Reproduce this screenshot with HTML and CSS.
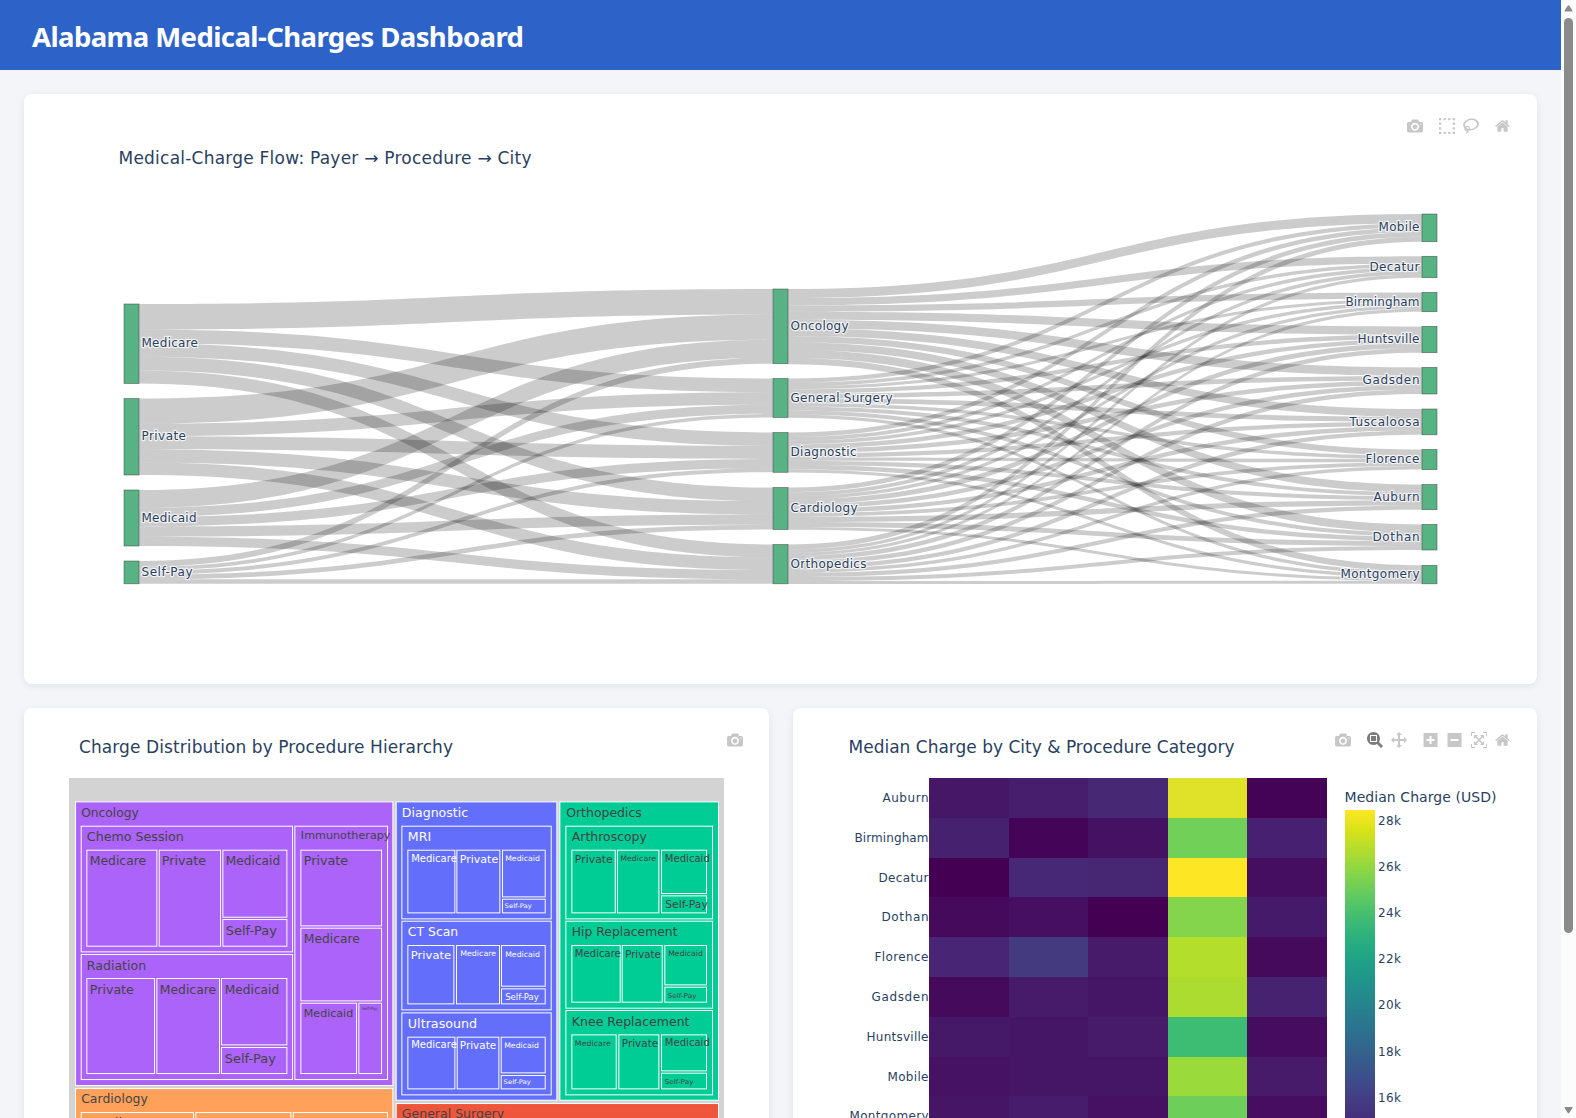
FILE: index.html
```html
<!DOCTYPE html>
<html lang="en">
<head>
<meta charset="utf-8">
<title>Alabama Medical-Charges Dashboard</title>
<link rel="stylesheet" href="styles.css">
</head>
<body>
<svg width="0" height="0" class="sprite">
  <defs>
    <symbol id="camera" viewBox="0 0 1000 1000"><path transform="matrix(1 0 0 -1 0 850)" d="m500 450c-83 0-150-67-150-150 0-83 67-150 150-150 83 0 150 67 150 150 0 83-67 150-150 150z m400 150h-120c-16 0-34 13-39 29l-31 93c-6 15-23 28-40 28h-340c-16 0-34-13-39-28l-31-94c-6-15-23-28-40-28h-120c-55 0-100-45-100-100v-450c0-55 45-100 100-100h800c55 0 100 45 100 100v450c0 55-45 100-100 100z m-400-550c-138 0-250 112-250 250 0 138 112 250 250 250 138 0 250-112 250-250 0-138-112-250-250-250z m365 380c-19 0-35 16-35 35 0 19 16 35 35 35 19 0 35-16 35-35 0-19-16-35-35-35z"/></symbol>
    <symbol id="select" viewBox="0 0 1000 1000"><path transform="matrix(1 0 0 -1 0 850)" d="m0 850l0-143 143 0 0 143-143 0z m286 0l0-143 143 0 0 143-143 0z m285 0l0-143 143 0 0 143-143 0z m286 0l0-143 143 0 0 143-143 0z m-857-286l0-143 143 0 0 143-143 0z m857 0l0-143 143 0 0 143-143 0z m-857-285l0-143 143 0 0 143-143 0z m857 0l0-143 143 0 0 143-143 0z m-857-286l0-143 143 0 0 143-143 0z m286 0l0-143 143 0 0 143-143 0z m285 0l0-143 143 0 0 143-143 0z m286 0l0-143 143 0 0 143-143 0z"/></symbol>
    <symbol id="lasso" viewBox="0 0 1031 1000"><path transform="matrix(1 0 0 -1 0 850)" d="m1018 538c-36 207-290 336-568 286-277-48-473-256-436-463 10-57 36-108 76-151-13-66 11-137 68-183 34-28 75-41 114-42l-55-70 0 0c-2-1-3-2-4-3-10-14-8-34 5-45 14-11 34-8 45 4 1 1 2 3 2 5l0 0 113 140c16 11 31 24 45 40 4 3 6 7 8 11 48-3 100 0 151 9 278 48 473 255 436 462z m-624-379c-80 14-149 48-197 96 42 42 109 47 156 9 33-26 47-66 41-105z m-187-74c-19 16-33 37-39 60 50-32 109-55 174-68-42-25-95-24-135 8z m360 75c-34-7-69-9-102-8 8 62-16 128-68 170-73 59-175 54-244-5-9 20-16 40-20 61-28 159 121 317 333 354s407-60 434-217c28-159-121-318-333-355z"/></symbol>
    <symbol id="home" viewBox="0 0 928.6 1000"><path transform="matrix(1 0 0 -1 0 850)" d="m786 296v-267q0-15-11-26t-25-10h-214v214h-143v-214h-214q-15 0-25 10t-11 26v267q0 1 0 2t0 2l321 264 321-264q1-1 1-4z m124 39l-34-41q-5-5-12-6h-2q-7 0-12 3l-386 322-386-322q-7-4-13-4-7 2-12 7l-35 41q-4 5-3 13t6 12l401 334q18 15 42 15t43-15l136-114v109q0 8 5 13t13 5h107q8 0 13-5t5-13v-227l122-102q5-5 6-12t-4-13z"/></symbol>
    <symbol id="zoombox" viewBox="0 0 1000 1000"><path transform="matrix(1 0 0 -1 0 850)" d="m1000-25l-250 251c40 63 63 138 63 218 0 224-182 406-407 406-224 0-406-182-406-406s183-406 407-406c80 0 155 22 218 62l250-250 125 125z m-812 250l0 438 437 0 0-438-437 0z m62 375l313 0 0-312-313 0 0 312z"/></symbol>
    <symbol id="pan" viewBox="0 0 1000 1000"><path transform="matrix(1 0 0 -1 0 850)" d="m1000 350l-187 188 0-125-250 0 0 250 125 0-188 187-187-187 125 0 0-250-250 0 0 125-188-188 186-187 0 125 252 0 0-250-125 0 187-188 188 188-125 0 0 250 250 0 0-126 187 188z"/></symbol>
    <symbol id="plus" viewBox="0 0 875 1000"><path transform="matrix(1 0 0 -1 0 850)" d="m1 787l0-875 875 0 0 875-875 0z m687-500l-187 0 0-187-125 0 0 187-188 0 0 125 188 0 0 187 125 0 0-187 187 0 0-125z"/></symbol>
    <symbol id="minus" viewBox="0 0 875 1000"><path transform="matrix(1 0 0 -1 0 850)" d="m0 788l0-876 876 0 0 876-876 0z m688-500l-500 0 0 125 500 0 0-125z"/></symbol>
    <symbol id="autoscale" viewBox="0 0 1000 1000"><path transform="matrix(1 0 0 -1 0 850)" d="m250 850l-187 0-63 0 0-62 0-188 63 0 0 188 187 0 0 62z m688 0l-188 0 0-62 188 0 0-188 62 0 0 188 0 62-62 0z m-875-938l0 188-63 0 0-188 0-62 63 0 187 0 0 62-187 0z m875 188l0-188-188 0 0-62 188 0 62 0 0 62 0 188-62 0z m-125 188l-1 0-93-94-156 156 156 156 92-93 2 0 0 250-250 0 0-2 93-92-156-156-156 156 94 92 0 2-250 0 0-250 0 0 93 93 157-156-157-156-93 94 0 0 0-250 250 0 0 0-94 93 156 157 156-157-93-93 0 0 250 0 0 250z"/></symbol>
    <linearGradient id="viridis" x1="0" y1="1" x2="0" y2="0">
      <stop offset="0" stop-color="#440154"/><stop offset=".0627" stop-color="#48186a"/><stop offset=".1255" stop-color="#472d7b"/><stop offset=".1882" stop-color="#424086"/><stop offset=".251" stop-color="#3b528b"/><stop offset=".3137" stop-color="#33638d"/><stop offset=".3765" stop-color="#2c728e"/><stop offset=".4392" stop-color="#26828e"/><stop offset=".502" stop-color="#21918c"/><stop offset=".5647" stop-color="#1fa088"/><stop offset=".6275" stop-color="#28ae80"/><stop offset=".6902" stop-color="#3fbc73"/><stop offset=".7529" stop-color="#5ec962"/><stop offset=".8157" stop-color="#84d44b"/><stop offset=".8784" stop-color="#addc30"/><stop offset=".9412" stop-color="#d8e219"/><stop offset="1" stop-color="#fde725"/>
    </linearGradient>
  </defs>
</svg>
<div class="app">
  <div class="page">
    <header class="header"><h1>Alabama Medical-Charges Dashboard</h1></header>
    <main class="grid">
      <section class="card wide">
        <svg class="chart" id="sankey" viewBox="24 94 1513 590">
          <text class="title" x="118.5" y="164" textLength="413">Medical-Charge Flow: Payer → Procedure → City</text>
        </svg>
        <div class="modebar">
          <div class="group"><svg class="ico"><use href="#camera"/></svg></div>
          <div class="group"><svg class="ico"><use href="#select"/></svg><svg class="ico"><use href="#lasso"/></svg></div>
          <div class="group"><svg class="ico narrow"><use href="#home"/></svg></div>
        </div>
      </section>
      <section class="card">
        <svg class="chart" id="treemap" viewBox="24 708 745 490">
          <text class="title" x="79" y="753" textLength="374">Charge Distribution by Procedure Hierarchy</text>
          <rect x="69" y="778" width="655" height="398" fill="#d3d3d3"/>
        </svg>
        <div class="modebar single"><div class="group"><svg class="ico"><use href="#camera"/></svg></div></div>
      </section>
      <section class="card">
        <svg class="chart" id="heatmap" viewBox="793 708 744 490">
          <text class="title" x="848.5" y="753" textLength="386">Median Charge by City &amp; Procedure Category</text>
          <text class="bar-title" x="1344.5" y="802" textLength="152">Median Charge (USD)</text>
          <rect x="1345" y="810" width="30" height="352" fill="url(#viridis)"/>
        </svg>
        <div class="modebar">
          <div class="group"><svg class="ico"><use href="#camera"/></svg></div>
          <div class="group"><svg class="ico active"><use href="#zoombox"/></svg><svg class="ico"><use href="#pan"/></svg></div>
          <div class="group"><svg class="ico narrow"><use href="#plus"/></svg><svg class="ico narrow"><use href="#minus"/></svg><svg class="ico"><use href="#autoscale"/></svg><svg class="ico narrow"><use href="#home"/></svg></div>
        </div>
      </section>
    </main>
  </div>
  <div class="scrollbar">
    <svg viewBox="0 0 15 15" class="arrow"><path d="M4 11.5 Q3 11.5 3.6 10.5 L6.8 5.6 Q7.5 4.8 8.2 5.6 L11.4 10.5 Q12 11.5 11 11.5Z"/></svg>
    <div class="thumb"></div>
    <svg viewBox="0 0 15 15" class="arrow"><path d="M4 4 Q3 4 3.6 5 L6.8 9.9 Q7.5 10.7 8.2 9.9 L11.4 5 Q12 4 11 4Z"/></svg>
  </div>
</div>
<script src="charts.js"></script>
</body>
</html>
```
FILE: styles.css
```css
* { box-sizing: border-box; }
html, body { height: 100%; overflow: hidden; }
body { margin: 0; background: #f4f5f8; font-family: "Open Sans", "Noto Sans", sans-serif; }
.sprite { position: absolute; }
.app { display: flex; height: 100vh; overflow: hidden; }
.page { flex: 1; min-width: 0; overflow: hidden; }
.header { height: 70px; padding: 0 32px; display: flex; align-items: center; background: #2d63c8; }
.header h1 { margin: 0; padding-top: 3px; font: 700 27.5px/38px "Noto Sans", "Open Sans", sans-serif; letter-spacing: -0.59px; color: #fff; white-space: nowrap; }
.grid { display: grid; grid-template-columns: 745px 744px; gap: 24px; padding: 24px; }
.card { position: relative; background: #fff; border-radius: 8px; box-shadow: 0 2px 8px rgba(0, 0, 0, .08); }
.wide { grid-column: 1 / -1; }
.chart { display: block; width: 100%; }
text { font-family: "DejaVu Sans", Verdana, sans-serif; font-size: 12px; fill: #2a3f5f; }
.title { font-size: 17px; }
.bar-title { font-size: 14px; }
.link { fill: #000; fill-opacity: .2; }
.node { fill: #58b384; stroke: #444; stroke-opacity: .7; stroke-width: .7; }
.node-label { paint-order: stroke; stroke: #fff; stroke-opacity: .75; stroke-width: 2.4px; stroke-linejoin: round; }
.tile { stroke: #fff; stroke-width: 1; }
.dark { fill: #444; }
.light { fill: #fff; }
.modebar { position: absolute; top: 24px; right: 25px; display: flex; }
.modebar.single { right: 24px; }
.group { display: flex; padding-left: 8px; }
.ico { display: block; width: 16px; height: 16px; margin: 0 4px; fill: #c7c7c7; }
.ico.narrow { width: 15px; margin-right: 5px; }
.group:last-child .ico:last-child { margin-right: 2px; }
.ico.active { fill: #7c7c7c; }
.scrollbar { width: 15px; background: #fcfcfc; display: flex; flex-direction: column; align-items: center; }
.arrow { width: 15px; height: 15px; fill: #8a8a8a; flex: none; }
.thumb { width: 9px; height: 915px; margin-top: 3px; margin-bottom: auto; border-radius: 5px; background: #8a8a8a; }
```
FILE: charts.js
```js
const NS = "http://www.w3.org/2000/svg";
function add(parent, tag, attrs, text) {
  const el = document.createElementNS(NS, tag);
  for (const k in attrs) el.setAttribute(k, attrs[k]);
  if (text) el.textContent = text;
  parent.appendChild(el);
  return el;
}

/* ---- Sankey: payer -> procedure -> city ---- 
   name, top, bottom, label width */
const sankey = document.getElementById("sankey");
const payers = [["Medicare", 304, 383.5, 56.5], ["Private", 398.5, 475, 44.5], ["Medicaid", 490, 546, 55], ["Self-Pay", 561, 583.8, 51]];
const procs = [["Oncology", 289, 363.7, 58], ["General Surgery", 378.5, 417.5, 102], ["Diagnostic", 432.5, 472.3, 66], ["Cardiology", 487.5, 529.5, 67], ["Orthopedics", 544.5, 583.8, 76]];
const cities = [["Mobile", 214, 241.7, 41], ["Decatur", 256.3, 277.7, 50], ["Birmingham", 292.4, 311.7, 74], ["Huntsville", 326.4, 352.7, 62], ["Gadsden", 367.4, 394, 57], ["Tuscaloosa", 409, 434.8, 70], ["Florence", 449.5, 469.6, 54], ["Auburn", 484.5, 509.7, 46], ["Dothan", 524.4, 550, 47], ["Montgomery", 565.3, 583.8, 79]];
const flowA = [[25.3, 13.6, 13.8, 13.6, 13], [25.1, 12.3, 13.5, 13.1, 12.6], [17.7, 9.1, 9.7, 10.1, 9.3], [5.9, 3.6, 4.1, 4.6, 4.4]];
const flowB = [
  [9, 7.2, 6.2, 8.1, 8.5, 7.7, 6, 7.6, 8.2, 6.2],
  [4.2, 3.4, 3, 4.3, 4.6, 4.9, 3.4, 3.9, 4, 3.3],
  [4.5, 3.6, 3.5, 4.4, 4.5, 4.3, 3.3, 4, 4.5, 3.2],
  [4.9, 3.8, 3.5, 5, 4.6, 4.5, 3.8, 5.5, 5, 3],
  [4.9, 3.3, 3.1, 4.5, 4.5, 4.4, 3.6, 4.2, 4, 3]
];

/* scale the flows until both sides add up to the node heights */
function balance(m, rows, cols) {
  for (let n = 0; n < 40; n++) {
    rows.forEach((r, i) => { const f = (r[2] - r[1]) / m[i].reduce((a, b) => a + b); m[i] = m[i].map(v => v * f); });
    cols.forEach((c, j) => { const f = (c[2] - c[1]) / m.reduce((a, r) => a + r[j], 0); m.forEach(r => r[j] *= f); });
  }
}
function links(m, rows, cols, x0, x1) {
  balance(m, rows, cols);
  const mid = (x0 + x1) / 2, ty = cols.map(c => c[1]);
  rows.forEach((r, i) => {
    let y = r[1];
    cols.forEach((c, j) => {
      const w = m[i][j], t = ty[j];
      add(sankey, "path", { class: "link", d: `M${x0} ${y}C${mid} ${y} ${mid} ${t} ${x1} ${t}V${t + w}C${mid} ${t + w} ${mid} ${y + w} ${x0} ${y + w}Z` });
      y += w;
      ty[j] += w;
    });
  });
}
links(flowA, payers, procs, 139, 773);
links(flowB, procs, cities, 788, 1422);
function nodes(list, x, end) {
  list.forEach(([name, a, b, width]) => {
    add(sankey, "rect", { class: "node", x, y: a, width: 15, height: b - a });
    add(sankey, "text", { class: "node-label", x: end ? x - 2.5 : x + 17.5, y: Math.round((a + b) / 2 + 3.6), "text-anchor": end ? "end" : "start", textLength: width }, name);
  });
}
nodes(payers, 124, false);
nodes(procs, 773, false);
nodes(cities, 1422, true);

/* ---- Treemap: tiles in thirds of a pixel, measured from each half's origin ----
   x1, y1, x2, y2, label, text start, text end, baseline, font size */
const treemap = document.getElementById("treemap");
const halves = [
  [60, "#ab63fa", "dark", [
    [46, 305, 998, 1156, "Oncology", 65, 235, 350, 12],
    [63, 378, 697, 755, "Chemo Session", 82, 370, 423, 12],
    [80, 450, 290, 738, "Medicare", 91, 257, 495, 12],
    [297, 450, 481, 738, "Private", 307, 437, 495, 12],
    [488, 450, 680, 651, "Medicaid", 499, 659, 495, 12],
    [488, 658, 680, 738, "Self-Pay", 499, 649, 705, 12],
    [63, 763, 697, 1138, "Radiation", 82, 257, 810, 12],
    [80, 835, 283, 1120, "Private", 91, 220, 881, 12],
    [290, 835, 478, 1120, "Medicare", 301, 467, 881, 12],
    [484, 835, 680, 1034, "Medicaid", 496, 656, 881, 12],
    [484, 1042, 680, 1120, "Self-Pay", 496, 646, 1089, 12],
    [704, 378, 982, 1138, "Immunotherapy", 724, 990, 417, 10.3],
    [722, 450, 964, 677, "Private", 733, 863, 495, 12],
    [722, 684, 964, 902, "Medicare", 733, 898, 729, 12],
    [722, 909, 889, 1120, "Medicaid", 733, 878, 951, 10.9],
    [896, 909, 964, 1120, "Self-Pay", 906, 951, 930, 4.2]]],
  [60, "#ffa15a", "dark", [
    [46, 1165, 998, 1440, "Cardiology", 65, 262, 1209, 12],
    [63, 1237, 400, 1420, "Cardiac MRI", 82, 320, 1282, 12],
    [407, 1237, 692, 1420],
    [699, 1237, 982, 1420]]],
  [390, "#636efa", "light", [
    [18, 305, 500, 1200, "Diagnostic", 37, 233, 350, 12],
    [35, 378, 483, 656, "MRI", 55, 122, 423, 12],
    [53, 450, 194, 638, "Medicare", 65, 199, 486, 9.6],
    [200, 450, 329, 638, "Private", 211, 323, 489, 10.2],
    [337, 450, 465, 590, "Medicaid", 347, 448, 482, 7.6],
    [337, 597, 465, 638, "Self-Pay", 345, 424, 624, 6.2],
    [35, 663, 483, 929, "CT Scan", 55, 203, 708, 12],
    [53, 736, 191, 911, "Private", 64, 182, 777, 11],
    [199, 736, 328, 911, "Medicare", 212, 317, 768, 7.6],
    [334, 736, 465, 858, "Medicaid", 347, 448, 771, 7.6],
    [334, 866, 465, 911, "Self-Pay", 347, 445, 900, 8],
    [35, 938, 483, 1184, "Ultrasound", 55, 260, 984, 12],
    [53, 1011, 194, 1166, "Medicare", 65, 199, 1043, 9.6],
    [201, 1011, 326, 1166, "Private", 211, 317, 1047, 9.8],
    [333, 1011, 465, 1118, "Medicaid", 344, 445, 1044, 7.6],
    [333, 1126, 465, 1166, "Self-Pay", 342, 421, 1152, 6.2]]],
  [390, "#00cc96", "dark", [
    [509, 305, 985, 1200, "Orthopedics", 530, 754, 350, 12],
    [527, 378, 967, 656, "Arthroscopy", 547, 769, 423, 12],
    [545, 450, 675, 638, "Private", 556, 667, 489, 10.2],
    [682, 450, 806, 638, "Medicare", 692, 797, 482, 7.6],
    [814, 450, 949, 580, "Medicaid", 826, 958, 486, 9.8],
    [814, 587, 949, 638, "Self-Pay", 827, 952, 624, 10],
    [527, 663, 967, 924, "Hip Replacement", 547, 861, 708, 12],
    [545, 736, 690, 906, "Medicare", 556, 691, 771, 9.6],
    [696, 736, 816, 906, "Private", 707, 811, 774, 9.8],
    [824, 736, 949, 854, "Medicaid", 836, 937, 768, 7.6],
    [824, 861, 949, 906, "Self-Pay", 834, 918, 893, 6.6],
    [527, 931, 967, 1184, "Knee Replacement", 547, 897, 978, 12],
    [545, 1004, 678, 1166, "Medicare", 556, 661, 1037, 7.6],
    [686, 1004, 806, 1166, "Private", 697, 803, 1041, 9.8],
    [814, 1004, 949, 1112, "Medicaid", 826, 958, 1038, 9.8],
    [814, 1119, 949, 1166, "Self-Pay", 825, 909, 1151, 6.6]]],
  [390, "#ef553b", "dark", [
    [18, 1210, 985, 1440, "General Surgery", 37, 341, 1255, 12]]]
];
halves.forEach(([ox, fill, tone, tiles]) => tiles.forEach(([x1, y1, x2, y2, label, t1, t2, base, size]) => {
  add(treemap, "rect", { class: "tile", fill, x: ox + x1 / 3 + .2, y: 700 + y1 / 3 + .2, width: (x2 - x1) / 3, height: (y2 - y1) / 3 });
  if (label) add(treemap, "text", { class: tone, x: ox + t1 / 3 - .5, y: 700 + base / 3, textLength: (t2 - t1) / 3 + 1, lengthAdjust: "spacingAndGlyphs", style: `font-size:${size}px` }, label);
}));

/* ---- Heatmap ---- */
const heatmap = document.getElementById("heatmap");
const xs = [929, 1009, 1088, 1168, 1247, 1327];
const ys = [778, 818, 858, 897, 937, 977, 1017, 1057, 1096, 1136, 1176];
const rows = [
  ["Auburn", 46, "#461766", "#471d6e", "#472875", "#dfe228", "#440356"],
  ["Birmingham", 74, "#462170", "#440559", "#451163", "#70d057", "#482071"],
  ["Decatur", 50, "#440154", "#472877", "#472673", "#fde725", "#450e60"],
  ["Dothan", 47, "#450a5c", "#460f61", "#440154", "#84d54b", "#461a6a"],
  ["Florence", 54, "#482575", "#443a80", "#471a6a", "#b3de2c", "#450a5c"],
  ["Gadsden", 57, "#450a5c", "#471a6a", "#461666", "#acdc30", "#472271"],
  ["Huntsville", 62, "#461868", "#461666", "#471a6a", "#3dbc74", "#460c5f"],
  ["Mobile", 41, "#461264", "#461666", "#461666", "#9bda3b", "#471a6a"],
  ["Montgomery", 79, "#461566", "#471c6d", "#461163", "#6dce59", "#460d60"]
];
rows.forEach(([city, width, ...cells], i) => {
  cells.forEach((fill, j) => add(heatmap, "rect", { fill, x: xs[j], y: ys[i], width: xs[j + 1] - xs[j], height: ys[i + 1] - ys[i] }));
  add(heatmap, "text", { x: 928.5, y: 802 + i * 39.8, "text-anchor": "end", textLength: width }, city);
});
[28, 26, 24, 22, 20, 18, 16].forEach((k, i) => add(heatmap, "text", { x: 1378, y: 825 + i * 46.1, textLength: 23 }, k + "k"));
```
